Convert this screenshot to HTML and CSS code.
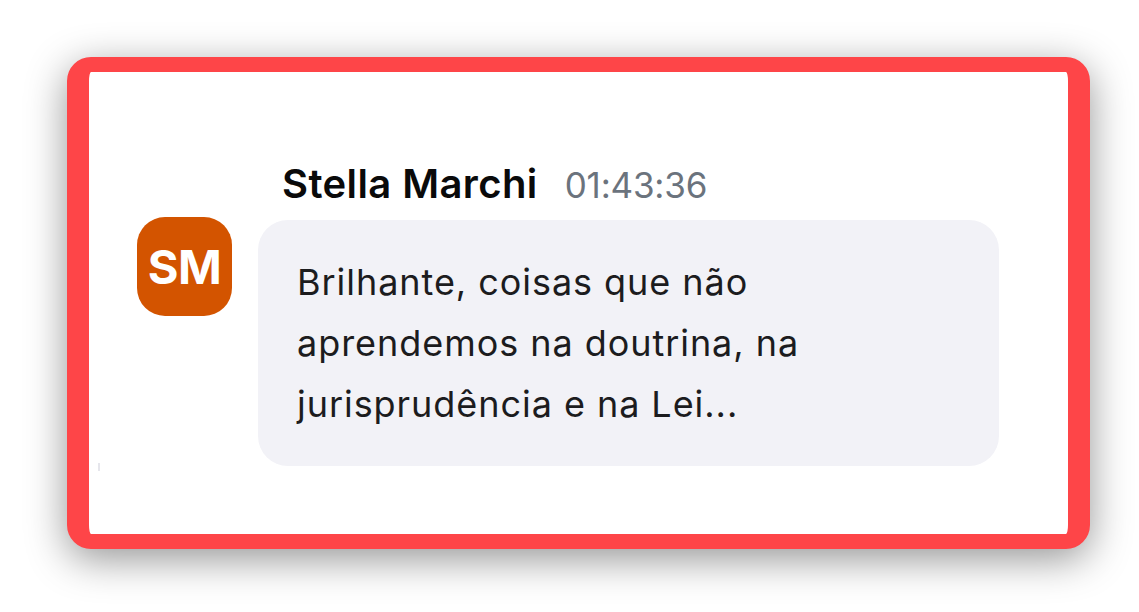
FILE: index.html
```html
<!DOCTYPE html>
<html lang="pt">
<head>
<meta charset="utf-8">
<title>Mensagem</title>
<link rel="stylesheet" href="styles.css">
</head>
<body>
<div class="stage">
  <div class="frame">
    <div class="msg">
      <div class="header">
        <span class="name">Stella Marchi</span>
        <span class="time">01:43:36</span>
      </div>
      <div class="avatar">SM</div>
      <div class="bubble">
        <p class="text">Brilhante, coisas que não aprendemos na doutrina, na jurisprudência e na Lei...</p>
      </div>
    </div>
    <span class="mark"></span>
  </div>
</div>
</body>
</html>
```

FILE: styles.css
```css
html, body {
  margin: 0;
  padding: 0;
  background: #ffffff;
}

body {
  font-family: Inter, "Noto Sans", "Liberation Sans", sans-serif;
  color: #1c1c1e;
}

.stage {
  box-sizing: border-box;
  min-height: 612px;
  padding: 57px 0 63px 67px;
}

.frame {
  position: relative;
  box-sizing: border-box;
  width: 1023px;
  height: 492px;
  border-style: solid;
  border-color: #fe4548;
  border-width: 15px 22px;
  border-radius: 24px;
  background: #ffffff;
  box-shadow: 0 10px 40px rgba(0, 0, 0, 0.42);
  padding: 87px 0 0 48px;
}

.msg {
  display: grid;
  grid-template-columns: 95px auto;
  column-gap: 26px;
  row-gap: 10px;
  justify-content: start;
  align-items: start;
}

.header {
  grid-column: 2;
  display: flex;
  align-items: baseline;
  gap: 27px;
  padding-left: 24px;
  line-height: 49px;
}

.name {
  font-size: 40px;
  font-weight: 600;
  color: #0a0a0a;
  letter-spacing: 0.4px;
}

.time {
  font-size: 35px;
  font-weight: 400;
  color: #6b737d;
  letter-spacing: -0.2px;
}

.avatar {
  grid-column: 1;
  width: 95px;
  height: 99px;
  margin-top: -3px;
  border-radius: 28px;
  background: #d35400;
  color: #ffffff;
  font-size: 47px;
  font-weight: 700;
  letter-spacing: -0.5px;
  display: flex;
  align-items: center;
  justify-content: center;
}

.bubble {
  grid-column: 2;
  box-sizing: border-box;
  width: 741px;
  padding: 32px 39px 31px;
  border-radius: 30px;
  background: #f2f2f7;
}

.text {
  margin: 0;
  max-width: 560px;
  font-size: 36px;
  line-height: 61px;
  letter-spacing: 0.95px;
  color: #1c1c1e;
}

.mark {
  position: absolute;
  left: 9px;
  top: 391px;
  width: 2px;
  height: 8px;
  background: #e6e6ec;
}
```
